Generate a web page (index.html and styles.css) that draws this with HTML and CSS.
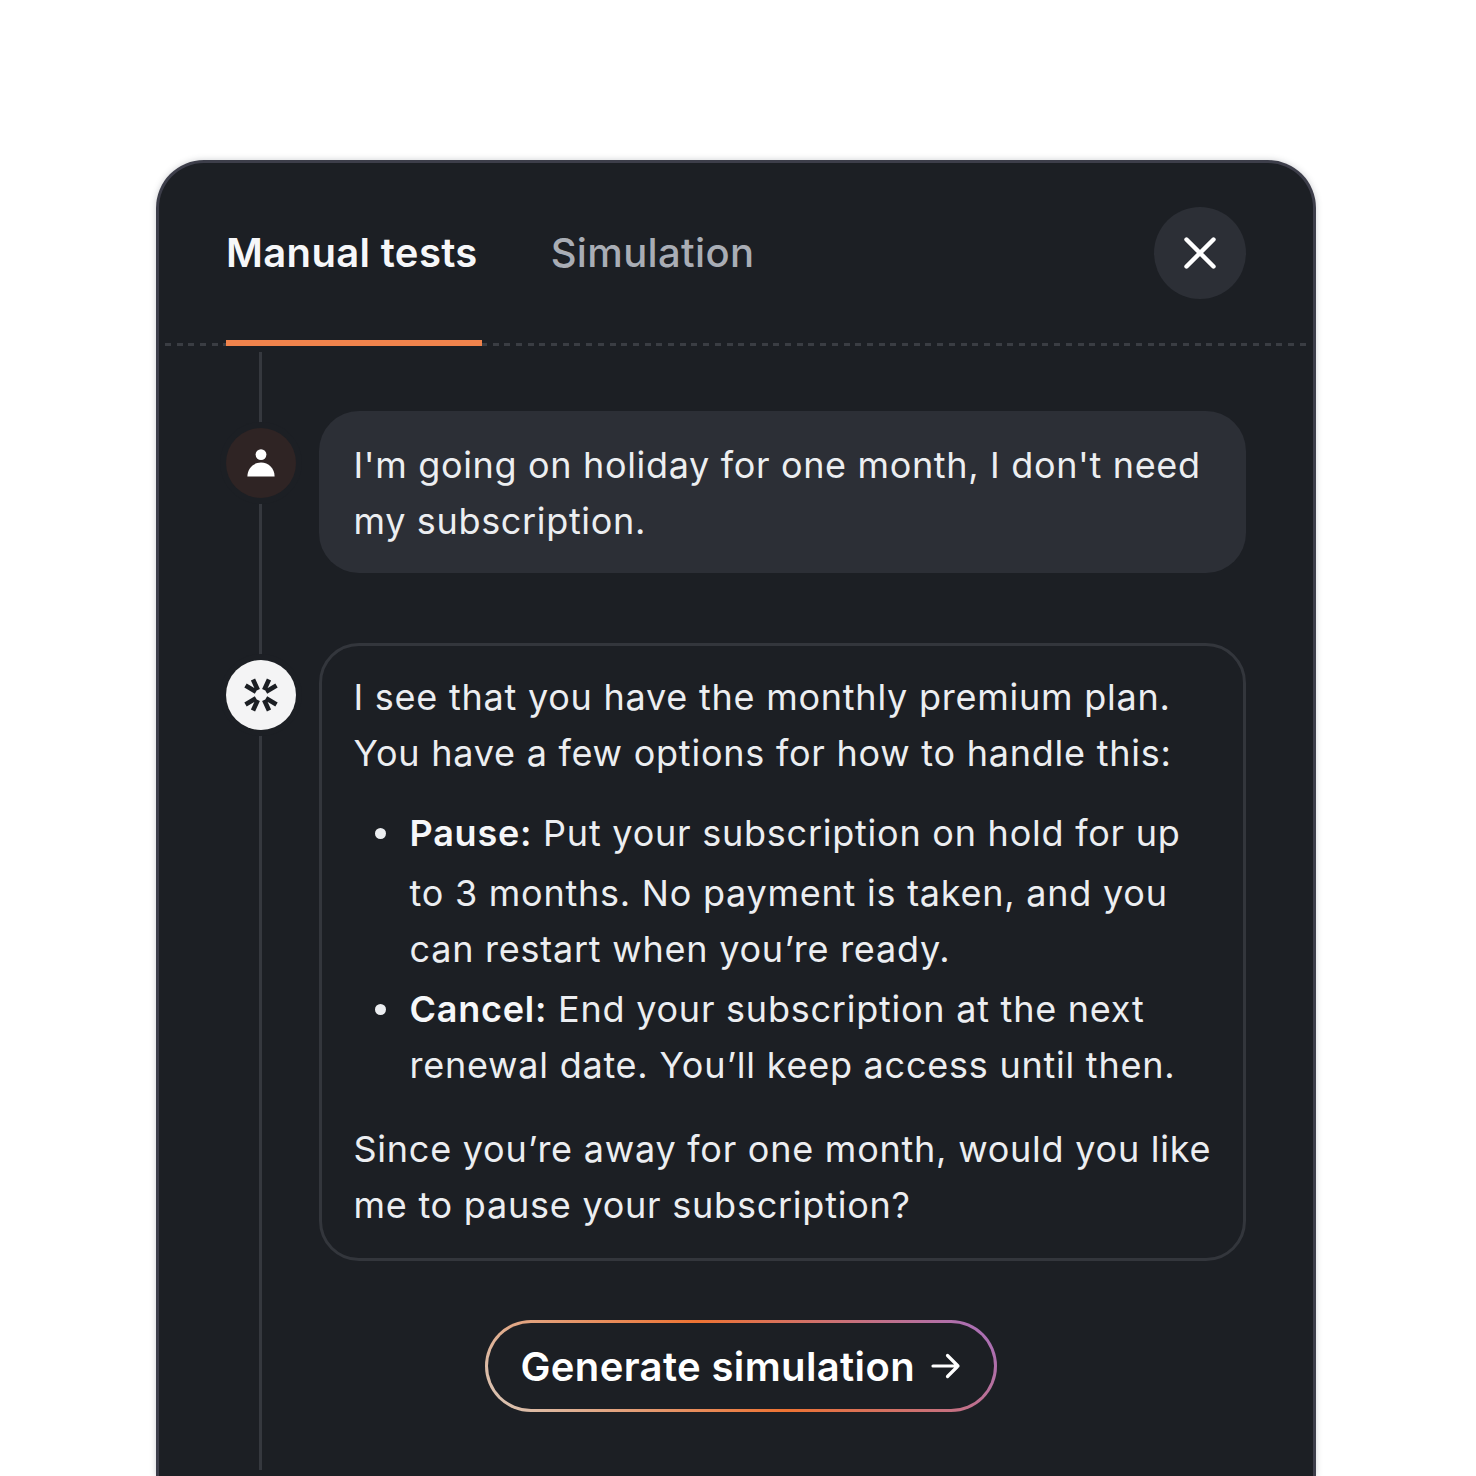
FILE: index.html
```html
<!DOCTYPE html>
<html lang="en">
<head>
    <meta charset="UTF-8">
    <meta name="viewport" content="width=device-width, initial-scale=1.0">
    <title>Manual tests</title>
    <link rel="stylesheet" href="styles.css">
</head>
<body>
    <div class="panel">
        <div class="panel-header">
            <div class="tabs">
                <div class="tab active">Manual tests</div>
                <div class="tab">Simulation</div>
            </div>
            <button class="close-btn" aria-label="Close">
                <svg width="32" height="32" viewBox="0 0 32 32" fill="none" stroke="#ffffff" stroke-width="4.4" stroke-linecap="round">
                    <path d="M2.5 2.5L29.5 29.5M29.5 2.5L2.5 29.5"/>
                </svg>
            </button>
        </div>

        <div class="thread">
            <div class="row">
                <div class="avatar avatar-user">
                    <svg width="28" height="28" viewBox="0 0 28 28" fill="#ffffff">
                        <circle cx="14" cy="5.6" r="5.4"/>
                        <path d="M0.4 27.5C0.4 19.5 6.4 13.5 14 13.5C21.6 13.5 27.6 19.5 27.6 27.5Z"/>
                    </svg>
                </div>
                <div class="bubble bubble-user">I'm going on holiday for one month, I don't need my subscription.</div>
            </div>

            <div class="row row-reply">
                <div class="avatar avatar-bot">
                    <svg width="34" height="34" viewBox="-17 -17 34 34" fill="none" stroke="#1c1f24" stroke-width="4.6">
                        <path d="M-15.5 -9.5L-5 -3.2M-8 -15.5L-3.2 -5M15.5 -9.5L5 -3.2M8 -15.5L3.2 -5M-15.5 9.5L-5 3.2M-8 15.5L-3.2 5M15.5 9.5L5 3.2M8 15.5L3.2 5"/>
                    </svg>
                </div>
                <div class="bubble bubble-bot">
                    <p>I see that you have the monthly premium plan. You have a few options for how to handle this:</p>
                    <ul>
                        <li><strong>Pause:</strong> Put your subscription on hold for up to 3 months. No payment is taken, and you can restart when you’re ready.</li>
                        <li><strong>Cancel:</strong> End your subscription at the next renewal date. You’ll keep access until then.</li>
                    </ul>
                    <p>Since you’re away for one month, would you like me to pause your subscription?</p>
                </div>
            </div>

            <div class="actions">
                <button class="generate-btn">
                    Generate simulation
                    <svg width="30" height="26" viewBox="0 0 30 26" fill="none" stroke="#ffffff" stroke-width="3.2" stroke-linecap="round" stroke-linejoin="round">
                        <path d="M2 13H27M16.5 2.5L27 13L16.5 23.5"/>
                    </svg>
                </button>
            </div>
        </div>
    </div>
</body>
</html>
```

FILE: styles.css
```css
body {
    margin: 0;
    height: 1476px;
    overflow: hidden;
    background-color: #ffffff;
    color: #f4f5f7;
    font-family: Inter, 'Liberation Sans', sans-serif;
    padding: 160px 160px 0 156px;
    box-sizing: border-box;
}

/* the panel runs off the bottom of the page, so no bottom edge */
.panel {
    background-color: #1c1f24;
    border: 3px solid #3d3e4a;
    border-bottom: none;
    border-radius: 48px 48px 0 0;
    height: 1316px;
    box-sizing: border-box;
    box-shadow: 0 0 6px rgba(61, 62, 74, 0.25);
}

.panel-header {
    display: flex;
    justify-content: space-between;
    align-items: flex-start;
    height: 183px;
    box-sizing: border-box;
    margin: 0 6px;
    padding: 44px 61px 0;
    background: repeating-linear-gradient(90deg, #3a3d43 0 6px, transparent 6px 11.7px) bottom left / 100% 3px no-repeat;
}

.tabs {
    display: flex;
    gap: 69px;
    height: 139px;
}

.tab {
    font-size: 40px;
    font-weight: 500;
    line-height: 92px;
    letter-spacing: 0.35px;
    color: #a9adb5;
}

.tab.active {
    color: #f6f7f9;
    font-weight: 600;
    height: 133px;
    border-bottom: 6px solid #f0834c;
    padding-right: 4px;
}

.close-btn {
    width: 92px;
    height: 92px;
    border: none;
    border-radius: 50%;
    background-color: #2c2f36;
    display: flex;
    align-items: center;
    justify-content: center;
    padding: 0;
}

.thread {
    position: relative;
    padding: 65px 67px 0 66.5px;
}

/* vertical line behind the avatars */
.thread::before {
    content: '';
    position: absolute;
    left: 100px;
    top: 6px;
    width: 3px;
    height: 1118px;
    background-color: #35383e;
}

.row {
    display: flex;
    gap: 23px;
    align-items: flex-start;
}

.row-reply {
    margin-top: 70px;
}

.avatar {
    position: relative;
    flex: none;
    width: 70px;
    height: 70px;
    margin-top: 17px;
    border-radius: 50%;
    display: flex;
    align-items: center;
    justify-content: center;
    box-shadow: 0 0 0 6px #1c1f24;
}

.avatar-user {
    background-color: #2f2424;
}

.avatar-bot {
    background-color: #f4f4f5;
}

.bubble {
    flex: 1;
    font-size: 36px;
    line-height: 56px;
    letter-spacing: 0.76px;
    color: #eceef1;
    border-radius: 40px;
    padding: 26px 35px 24px;
}

.bubble-user {
    background-color: #2c2f36;
    letter-spacing: 0.66px;
}

.bubble-bot {
    border: 3px solid #33363c;
    padding: 23px 24px 25px 32px;
}

.bubble p {
    margin: 0;
}

.bubble ul {
    margin: 20px 0 28px;
    padding-left: 56px;
    list-style: none;
}

.bubble li {
    position: relative;
}

.bubble li::before {
    content: '';
    position: absolute;
    left: -35px;
    top: 23px;
    width: 11px;
    height: 11px;
    border-radius: 50%;
    background-color: #eceef1;
}

.bubble li:first-child::before {
    top: 27px;
}

.bubble strong {
    font-weight: 600;
    color: #f6f7f9;
}

.bubble li:first-child strong {
    line-height: 64px;
}

.bubble li + li {
    margin-top: 4px;
}

.actions {
    display: flex;
    justify-content: center;
    padding: 59px 0 0 11px;
}

.generate-btn {
    display: flex;
    align-items: center;
    gap: 16px;
    height: 92px;
    padding: 0 33px 0 32px;
    box-sizing: border-box;
    border: 3px solid transparent;
    border-radius: 46px;
    background: linear-gradient(#1c1f24, #1c1f24) padding-box,
        linear-gradient(45deg, #d9c8ba 0%, #ee7333 50%, #a56fc0 100%) border-box;
    color: #ffffff;
    font-family: inherit;
    font-size: 40px;
    font-weight: 600;
    letter-spacing: 0.37px;
}
```
